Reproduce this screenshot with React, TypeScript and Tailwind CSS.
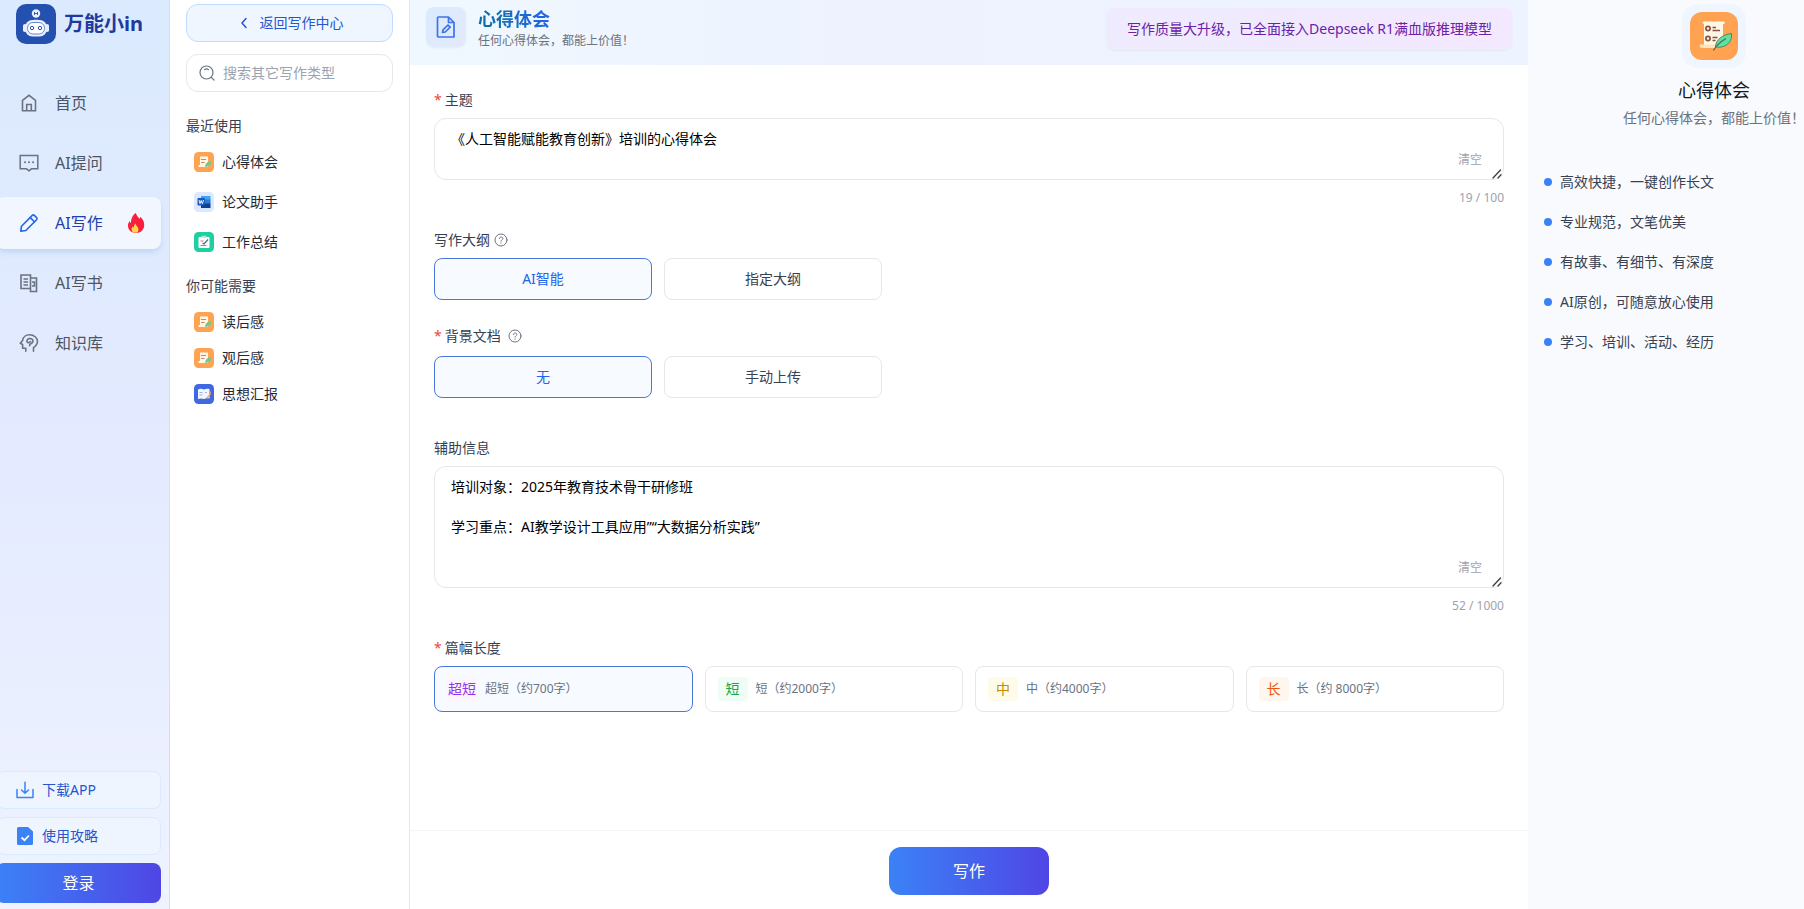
import { useState, type ReactNode } from 'react';
import clsx from 'clsx';

const stroke = {
  fill: 'none',
  stroke: 'currentColor',
  strokeLinecap: 'round',
  strokeLinejoin: 'round',
} as const;

/* ---------- icons ---------- */

function LogoIcon() {
  return (
    <svg viewBox="0 0 40 40" className="size-10 shrink-0">
      <rect width="40" height="40" rx="10" fill="#2450b0" />
      <circle cx="20" cy="9.5" r="4.2" fill="#e8efff" />
      <path d="M18.5 8v3M21.5 8v3M18.5 9.5h3" stroke="#2450b0" strokeWidth="0.9" />
      <path d="M14 17.5c2-2.300 10-2.300 12 0" fill="#e8efff" />
      <rect x="7" y="20" width="3.500" height="8" rx="1.750" fill="#e8efff" />
      <rect x="29.500" y="20" width="3.500" height="8" rx="1.750" fill="#e8efff" />
      <rect x="9" y="16" width="22" height="16.500" rx="7.500" fill="#e8efff" />
      <rect x="11.500" y="18.500" width="17" height="11.500" rx="5.500" fill="#fff" stroke="#5b7cc8" strokeWidth="0.9" />
      <circle cx="16" cy="24" r="1.700" fill="none" stroke="#2450b0" />
      <circle cx="24" cy="24" r="1.700" fill="none" stroke="#2450b0" />
    </svg>
  );
}

function HomeIcon() {
  return (
    <svg viewBox="0 0 20 20" className="size-5" {...stroke} strokeLinecap="butt" strokeLinejoin="miter" strokeWidth="1.6">
      <path d="M3.5 7.3 10 2.3l6.5 5v10.4h-13z" />
      <path d="M7.7 17.5v-6h4.6v6" />
    </svg>
  );
}

function ChatIcon() {
  return (
    <svg viewBox="0 0 20 20" className="size-5" {...stroke} strokeLinejoin="miter" strokeWidth="1.5">
      <path d="M1.2 2.500h17.600v13.300h-6.300L10 17.800l-2.500-2H1.200z" />
      <path d="M6 9.300h.1M10 9.300h.1M14 9.300h.1" strokeWidth="1.9" />
    </svg>
  );
}

function PencilIcon() {
  return (
    <svg viewBox="0 0 20 20" className="size-5" {...stroke} strokeWidth="1.6">
      <path d="M1.8 18.2l.7-5L13.300 2.400a1.500 1.500 0 0 1 2.100 0l2.200 2.200a1.500 1.500 0 0 1 0 2.100L6.800 17.500z" />
      <path d="M11.300 4.600l4.100 4.100" />
    </svg>
  );
}

function BookIcon() {
  return (
    <svg viewBox="0 0 20 20" className="size-5" {...stroke} strokeLinecap="butt" strokeLinejoin="miter" strokeWidth="1.6">
      <path d="M11.500 15.500H2V2h9.500v16.500h6V5h-6" />
      <path d="M4.500 6H9M4.500 9H9M4.500 12H9M13 9h2.500v4H13" />
    </svg>
  );
}

function BrainIcon() {
  return (
    <svg viewBox="0 0 20 20" className="size-5" {...stroke} strokeWidth="1.6">
      <path d="M6.800 18.200v-3H3.600v-3.700L1.300 10.300 3.600 7.500C4 4 7 1.800 10.500 1.800c4.500 0 8 3 8 6.700 0 2.700-1.800 4.600-4 6.200v3.500" />
      <path d="M8.200 7.200c.4-1.700 3.300-2.100 4.800-1 1.600 1.200 1.200 3.500-.8 4.300-1 .4-1.700 1-1.700 2.300M8.200 7.200c-1 1.300.3 2.900 1.900 2.500l1.400-1.200" />
    </svg>
  );
}

function FireIcon() {
  return (
    <svg viewBox="0 0 18 20" className="h-5 w-[18px]">
      <path
        d="M8.800 0c.7 2.600 2.400 4 3.700 5.700.6-.4.800-1.100.7-1.900 2.400 2 4.300 4.900 4 8.600-.3 3.800-2.700 6.700-6.400 7.300H6.700C3.200 18.800.8 16 1 12.300c.1-2 .8-3.200 1.700-4.400.2 1 .6 1.700 1.300 2C3.900 6.300 5.700 1.800 8.800 0z"
        fill="#f8203c"
      />
      <path d="M6.300 19.500c-2-1.300-2.300-4-.7-5.900.3.700.7 1 1.200 1.100-.1-1.800.6-3.200 1.800-4.200.3 2.400 3 3.700 2.900 6.300 0 1.200-.6 2.100-1.500 2.700z" fill="#ffd84a" />
    </svg>
  );
}

function DownloadIcon() {
  return (
    <svg viewBox="0 0 18 18" className="size-[18px] shrink-0 text-[#3b82f6]" {...stroke} strokeWidth="1.5">
      <path d="M1 8.500V16.500h16V8.500M9 1.200v11M5.500 9l3.500 3.300L12.500 9" />
    </svg>
  );
}

function GuideIcon() {
  return (
    <svg viewBox="0 0 18 18" className="size-[18px] shrink-0">
      <path d="M2.500 0h9.500L17 4.500V16.500A1.500 1.500 0 0 1 15.500 18h-13A1.500 1.500 0 0 1 1 16.500v-15A1.500 1.500 0 0 1 2.500 0z" fill="#3b82f6" />
      <path d="M5.500 10.500l3 2.700 4.500-4.700" fill="none" stroke="#fff" strokeWidth="1.7" />
    </svg>
  );
}

function ScrollIcon({ className }: { className: string }) {
  return (
    <svg viewBox="0 0 48 48" className={className}>
      <rect width="48" height="48" rx="12" fill="#ffa353" />
      <path d="M14 9.500h19c2.500 0 2.500 2.500 0 2.500v23H14V12c-2-.5-2-2.500 0-2.500z" fill="#fff6e6" />
      <path d="M10 32.500h18v3.500H12c-2 0-2.500-2-2-3.500z" fill="#ffe3bd" />
      <g fill="none" stroke="#8a5040" strokeWidth="1.7">
        <circle cx="18" cy="16.500" r="2.100" />
        <circle cx="18" cy="26.500" r="2.100" />
        <path d="M22.500 15.500h3.500M22.500 18.500h7.500M22.500 25.500h5M22.500 28.500h3" />
      </g>
      <path d="M41.500 21.500c.8 7-3.500 12.500-10.500 13.500-2.500.3-4.500.5-5.500 0 0-7 7-12.500 16-13.500z" fill="#5fe0a0" stroke="#4c7a58" strokeWidth="0.9" />
      <path d="M36 26.500c-5 3-9.500 6.500-12.500 12" fill="none" stroke="#4c6b50" strokeWidth="1.2" />
    </svg>
  );
}

function NoteIcon() {
  return (
    <svg viewBox="0 0 20 20" className="size-5 shrink-0">
      <rect width="20" height="20" rx="4.500" fill="#ffa353" />
      <path d="M6 4.500h8V15H4.500v-2H6z" fill="#fff6e6" />
      <path d="M7 7.500h5M7 10.500h3.500" stroke="#c98a63" strokeWidth="1.2" />
      <path d="M17.500 9c0 3.500-2 6-6.500 5.800.3-3.300 2.800-5.500 6.500-5.800z" fill="#6fcb8a" />
    </svg>
  );
}

function WordIcon() {
  return (
    <svg viewBox="0 0 20 20" className="size-5 shrink-0">
      <rect width="20" height="20" rx="4.500" fill="#dbe8fe" />
      <rect x="7" y="4" width="9.500" height="4" fill="#41a5ee" />
      <rect x="7" y="7.500" width="9.500" height="4.500" fill="#2b7cd3" />
      <rect x="7" y="11.500" width="9.500" height="4.500" fill="#103f91" />
      <rect x="3.500" y="6" width="7.500" height="7.500" rx="0.8" fill="#185abd" />
      <path d="M5 8l1 3.700L7.200 8.500l1.200 3.200L9.500 8" fill="none" stroke="#fff" strokeWidth="0.9" />
    </svg>
  );
}

function SummaryIcon() {
  return (
    <svg viewBox="0 0 20 20" className="size-5 shrink-0">
      <rect width="20" height="20" rx="4.500" fill="#1fcfa2" />
      <rect x="4.500" y="5" width="11" height="11" rx="1" fill="#fff" />
      <rect x="7.500" y="3.700" width="5" height="2.300" rx="1" fill="#b5e8dc" />
      <path d="M6.500 9h3M6.500 13.500h6" stroke="#e56a6a" strokeWidth="1.2" />
      <path d="M8.500 11l1.500 1 4-4.500" fill="none" stroke="#3b6f80" strokeWidth="1.2" />
    </svg>
  );
}

function ReportIcon() {
  return (
    <svg viewBox="0 0 20 20" className="size-5 shrink-0">
      <rect width="20" height="20" rx="4.500" fill="#3f69e0" />
      <path d="M4 5.500c2-.9 4-.9 6 0 1.500-.9 3.500-.9 5.500-.5v9.500c-2-.3-4-.3-5.500.5-2-.8-4-.8-6 0z" fill="#f4f6ff" />
      <path d="M5.500 8.500h3M5.500 11h3M11 8.500h2" stroke="#9db2ea" />
      <path d="M15.500 6.500c1.300 2.500.3 5.500-3 7.500" fill="none" stroke="#f0a05a" strokeWidth="1.3" />
    </svg>
  );
}

function HelpIcon() {
  return (
    <svg viewBox="0 0 14 14" className="size-[14px] text-[#6b7280]" {...stroke}>
      <circle cx="7" cy="7" r="6" />
      <path d="M5.300 5.600c0-2.200 3.500-2.200 3.500-.1C8.800 6.800 7 6.800 7 8.200M7 10v.3" />
    </svg>
  );
}

/* ---------- data ---------- */

const navItems = [
  { label: '首页', icon: <HomeIcon /> },
  { label: 'AI提问', icon: <ChatIcon /> },
  { label: 'AI写作', icon: <PencilIcon />, active: true },
  { label: 'AI写书', icon: <BookIcon /> },
  { label: '知识库', icon: <BrainIcon /> },
];

const recentTypes = [
  { label: '心得体会', icon: <NoteIcon /> },
  { label: '论文助手', icon: <WordIcon /> },
  { label: '工作总结', icon: <SummaryIcon /> },
];

const suggestedTypes = [
  { label: '读后感', icon: <NoteIcon /> },
  { label: '观后感', icon: <NoteIcon /> },
  { label: '思想汇报', icon: <ReportIcon /> },
];

const lengths = [
  { tag: '超短', text: '超短（约700字）', color: 'bg-[#faf5ff] text-[#9333ea]' },
  { tag: '短', text: '短（约2000字）', color: 'bg-[#f0fdf4] text-[#16a34a]' },
  { tag: '中', text: '中（约4000字）', color: 'bg-[#fefce8] text-[#ca8a04]' },
  { tag: '长', text: '长（约 8000字）', color: 'bg-[#fff7ed] text-[#ea580c]' },
];

const features = [
  '高效快捷，一键创作长文',
  '专业规范，文笔优美',
  '有故事、有细节、有深度',
  'AI原创，可随意放心使用',
  '学习、培训、活动、经历',
];

/* ---------- panels ---------- */

function Sidebar() {
  return (
    <aside className="flex w-[170px] shrink-0 flex-col overflow-hidden border-r border-[#cfe0fb] bg-linear-to-b from-[#dbeafe] via-[#e4eaff] to-[#eff3ff] pr-2">
      <div className="flex items-center gap-2 pt-1 pl-4">
        <LogoIcon />
        <span className="text-xl font-bold text-[#1e3a9f]">万能小in</span>
      </div>

      <nav className="mt-[33px] flex flex-col gap-2">
        {navItems.map((item) => (
          <a
            key={item.label}
            href="#"
            className={clsx(
              '-ml-1 flex h-[52px] items-center rounded-lg pr-4 pl-[23px]',
              item.active ? 'bg-[#f1f6ff] text-[#1e40af] shadow-md shadow-[#bfd6f8]' : 'text-[#4b5563]'
            )}
          >
            <span className={item.active ? 'text-[#2563eb]' : 'text-[#6b7280]'}>{item.icon}</span>
            <span className="ml-4 flex-1 text-base">{item.label}</span>
            {item.active && <FireIcon />}
          </a>
        ))}
      </nav>

      <div className="mt-auto -ml-1 flex flex-col gap-2 pb-1.5">
        <button className="flex h-[38px] items-center gap-2 rounded-lg border border-[#dbeafe] bg-[#eff5ff] pl-[19px] text-sm text-[#2556d0]">
          <DownloadIcon />
          下载APP
        </button>
        <button className="flex h-[38px] items-center gap-2 rounded-lg border border-[#dbeafe] bg-[#eff5ff] pl-[19px] text-sm text-[#2556d0]">
          <GuideIcon />
          使用攻略
        </button>
        <button className="h-10 rounded-lg bg-linear-to-r/srgb from-[#3b82f6] to-[#4f46e5] text-base text-white">登录</button>
      </div>
    </aside>
  );
}

function TypeLink({ icon, label, tall }: { icon: ReactNode; label: string; tall?: boolean }) {
  return (
    <li>
      <a href="#" className={clsx('flex items-center gap-2 px-2 text-sm text-[#1f2937]', tall ? 'h-10' : 'h-9')}>
        {icon}
        {label}
      </a>
    </li>
  );
}

function TypePanel() {
  return (
    <aside className="w-60 shrink-0 border-r border-[#e5e7eb] bg-white px-4 pt-1">
      <button className="flex h-[38px] w-full items-center justify-center gap-3 rounded-xl border border-[#bfdbfe] bg-[#eff6ff] pl-1 text-sm text-[#2556d0]">
        <svg viewBox="0 0 8 12" className="h-3 w-2" {...stroke} strokeWidth="1.5">
          <path d="M6 1.5 2 6l4 4.500" />
        </svg>
        返回写作中心
      </button>
      <label className="mt-3 flex h-[38px] items-center gap-2 rounded-xl border border-[#e5e7eb] pl-3">
        <svg viewBox="0 0 16 16" className="size-4 shrink-0 text-[#6b7280]" {...stroke} strokeWidth="1.2">
          <circle cx="7.500" cy="7.500" r="6.500" />
          <path d="M12.300 12.300l2.700 2.700M5.500 4.700c1.200-.9 2.800-.9 4 0" />
        </svg>
        <input
          type="search"
          aria-label="搜索其它写作类型"
          placeholder="搜索其它写作类型"
          className="w-full min-w-0 text-sm outline-none placeholder:text-[#9ca3af]"
        />
      </label>

      <h3 className="mt-6 text-sm text-[#374151]">最近使用</h3>
      <ul className="mt-1.5">
        {recentTypes.map((t) => (
          <TypeLink key={t.label} icon={t.icon} label={t.label} tall />
        ))}
      </ul>
      <h3 className="mt-3.5 text-sm text-[#374151]">你可能需要</h3>
      <ul className="mt-2">
        {suggestedTypes.map((t) => (
          <TypeLink key={t.label} icon={t.icon} label={t.label} />
        ))}
      </ul>
    </aside>
  );
}

function FieldLabel({ text, htmlFor, required }: { text: string; htmlFor?: string; required?: boolean }) {
  return (
    <label htmlFor={htmlFor} className="flex text-sm text-[#374151]">
      {required && <span className="mr-[3px] text-[#ef4444]">*</span>}
      {text}
    </label>
  );
}

type TextFieldProps = { id: string; initial: string; used: number; max: number; className: string };

function TextField({ id, initial, used, max, className }: TextFieldProps) {
  const [value, setValue] = useState(initial);
  return (
    <div className="mt-2">
      <div className="relative">
        <textarea
          id={id}
          value={value}
          onChange={(e) => setValue(e.target.value)}
          className={clsx(
            'block w-full resize-none rounded-xl border border-[#e5e7eb] bg-white px-4 py-2.5 text-sm text-black outline-none',
            className
          )}
        />
        <button onClick={() => setValue('')} className="absolute right-[22px] bottom-3 text-xs text-[#9ca3af]">
          清空
        </button>
        <svg viewBox="0 0 10 10" className="pointer-events-none absolute right-0.5 bottom-px size-2.5 text-[#3f3f3f]" {...stroke} strokeWidth="1.3">
          <path d="M1 9l7.500-8M6 9l3-3.200" />
        </svg>
      </div>
      <p className="mt-2 text-right text-xs leading-5 text-[#9ca3af]">
        {value === initial ? used : value.length} / {max}
      </p>
    </div>
  );
}

function OptionPair({ options }: { options: string[] }) {
  const [picked, setPicked] = useState(options[0]);
  return (
    <div className="flex gap-3">
      {options.map((o) => (
        <button
          key={o}
          aria-pressed={o === picked}
          onClick={() => setPicked(o)}
          className={clsx(
            'h-[42px] w-[218px] rounded-lg border text-sm',
            o === picked ? 'border-[#4a78d8] bg-[#f7faff] text-[#2563eb]' : 'border-[#e5e7eb] bg-white text-[#374151]'
          )}
        >
          {o}
        </button>
      ))}
    </div>
  );
}

function LengthPicker() {
  const [picked, setPicked] = useState('超短');
  return (
    <div className="mt-2 grid grid-cols-4 gap-3">
      {lengths.map((l) => (
        <button
          key={l.tag}
          aria-pressed={l.tag === picked}
          onClick={() => setPicked(l.tag)}
          className={clsx(
            'flex h-[46px] items-center gap-2 rounded-lg border px-3',
            l.tag === picked ? 'border-[#4a78d8] bg-[#f7faff]' : 'border-[#e5e7eb] bg-white'
          )}
        >
          <span className={clsx('flex h-6 w-[30px] items-center justify-center rounded text-sm', l.color)}>{l.tag}</span>
          <span className="text-xs text-[#6b7280]">{l.text}</span>
        </button>
      ))}
    </div>
  );
}

function Editor() {
  return (
    <main className="flex min-w-0 flex-1 flex-col bg-white">
      <header className="flex h-[65px] shrink-0 items-start justify-between bg-linear-to-r/srgb from-[#f0f8ff] via-[#edf2fe] to-[#edf4ff] via-40% px-4">
        <div className="flex gap-3 pt-[7px]">
          <div className="flex size-10 items-center justify-center rounded-lg bg-linear-to-br from-[#dbeafe] to-[#e2eafb] text-[#3b74ea] shadow-xs">
            <svg viewBox="0 0 20 24" className="h-6 w-5" {...stroke} strokeWidth="1.7">
              <path d="M2.500 2h10L18 7.500V22H2.500A1 1 0 0 1 1.500 21V3A1 1 0 0 1 2.500 2zM12.500 2v5.500H18" />
              <path d="M6.500 17.500l.5-2.700 5-4.800 2.200 2.200-5 4.800z" />
            </svg>
          </div>
          <div>
            <h1 className="w-fit bg-linear-to-r from-[#0e6f9f] to-[#2563eb] bg-clip-text text-lg leading-6 font-bold text-transparent">心得体会</h1>
            <p className="text-xs leading-5 text-[#6b7280]">任何心得体会，都能上价值！</p>
          </div>
        </div>
        <p className="mt-2 rounded-lg bg-linear-to-r from-[#efebfe] to-[#f3e8ff] px-5 py-[11px] text-sm text-[#6b21a8] shadow-xs">
          写作质量大升级，已全面接入Deepseek R1满血版推理模型
        </p>
      </header>

      <div className="flex-1 px-6 pt-[25px]">
        <FieldLabel text="主题" htmlFor="topic" required />
        <TextField id="topic" initial="《人工智能赋能教育创新》培训的心得体会" used={19} max={100} className="h-[62px]" />

        <div className="mt-[22px] mb-2 flex items-center gap-1">
          <FieldLabel text="写作大纲" />
          <HelpIcon />
        </div>
        <OptionPair options={['AI智能', '指定大纲']} />

        <div className="mt-[26px] mb-2.5 flex items-center gap-[7px]">
          <FieldLabel text="背景文档" required />
          <HelpIcon />
        </div>
        <OptionPair options={['无', '手动上传']} />

        <div className="mt-10">
          <FieldLabel text="辅助信息" htmlFor="extra" />
        </div>
        <TextField
          id="extra"
          initial={'培训对象：2025年教育技术骨干研修班\n\n学习重点：AI教学设计工具应用”“大数据分析实践”'}
          used={52}
          max={1000}
          className="h-[122px]"
        />

        <div className="mt-[22px]">
          <FieldLabel text="篇幅长度" required />
        </div>
        <LengthPicker />
      </div>

      <footer className="flex justify-center border-t border-[#f3f4f6] pt-4 pb-3.5">
        <button className="h-12 w-40 rounded-xl bg-linear-to-r/srgb from-[#3b82f6] to-[#4f46e5] text-base text-white">写作</button>
      </footer>
    </main>
  );
}

function InfoPanel() {
  return (
    <aside className="w-[276px] shrink-0 overflow-hidden bg-[#f8fafd] pt-1">
      <div className="flex flex-col items-center pl-24">
        <div className="rounded-2xl bg-[#eff6ff] p-2">
          <ScrollIcon className="size-12" />
        </div>
        <h2 className="mt-2 text-lg leading-7 text-[#111827]">心得体会</h2>
        <p className="text-sm leading-7 whitespace-nowrap text-[#6b7280]">任何心得体会，都能上价值！</p>
      </div>
      <ul className="mt-[30px] px-4">
        {features.map((f) => (
          <li key={f} className="flex h-10 items-center gap-2 text-sm text-[#374151]">
            <span className="size-2 rounded-full bg-[#3b82f6]" />
            {f}
          </li>
        ))}
      </ul>
    </aside>
  );
}

export default function App() {
  return (
    <div className="flex min-h-screen overflow-hidden bg-white font-['Noto_Sans','Noto_Sans_CJK_SC',sans-serif]">
      <Sidebar />
      <TypePanel />
      <Editor />
      <InfoPanel />
    </div>
  );
}
